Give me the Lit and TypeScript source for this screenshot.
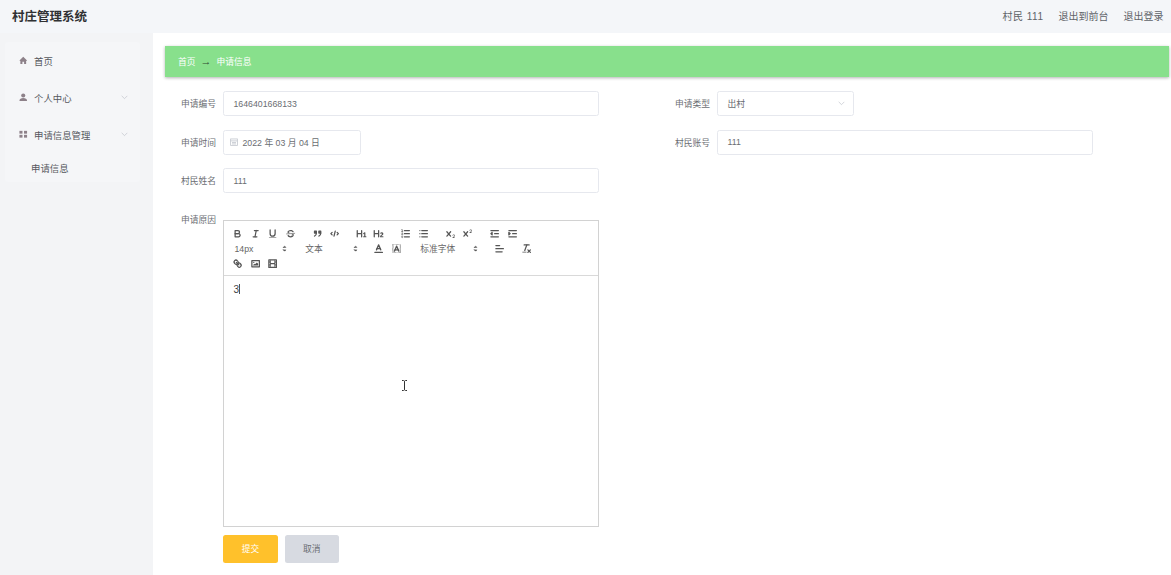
import { LitElement, html, css, svg } from "lit";
import { customElement } from "lit/decorators.js";

const S = (inner: unknown) => html`<svg class="qi" viewBox="0 0 18 18">${inner}</svg>`;
const xMark = "M9.651,5.241a1,1,0,0,0-1.41.108L6,7.964,3.759,5.349a1,1,0,1,0-1.519,1.3L4.683,9.5,2.241,12.35a1,1,0,1,0,1.519,1.3L6,11.036l2.241,2.616a1,1,0,0,0,1.519-1.3L7.317,9.5,9.759,6.651A1,1,0,0,0,9.651,5.241Z";
const checker: [number, number][] = [];
for (let y = 2; y < 16; y++) for (let x = 2; x < 16; x++) {
  const inA = y >= 3 && y <= 14 && x >= 4 && x <= 13;
  if ((x + y) % 2 === 0 && !inA) checker.push([x, y]);
}
const ICONS: Record<string, unknown> = {
  bold: svg`<path class="st" d="M5,4H9.5A2.5,2.5,0,0,1,12,6.5v0A2.5,2.5,0,0,1,9.5,9H5V4Z"/><path class="st" d="M5,9h5.5A2.5,2.5,0,0,1,13,11.5v0A2.5,2.5,0,0,1,10.5,14H5V9Z"/>`,
  italic: svg`<line class="st" x1="7" x2="13" y1="4" y2="4"/><line class="st" x1="5" x2="11" y1="14" y2="14"/><line class="st" x1="8" x2="10" y1="14" y2="4"/>`,
  underline: svg`<path class="st" d="M5,3V9a4.012,4.012,0,0,0,4,4H9a4.012,4.012,0,0,0,4-4V3"/><rect class="fi" height="1" rx="0.5" ry="0.5" width="12" x="3" y="15"/>`,
  strike: svg`<line class="st thin" x1="15.5" x2="2.5" y1="8.5" y2="9.5"/><path class="fi" d="M9.007,8C6.542,7.791,6,7.519,6,6.5,6,5.792,7.283,5,9,5c1.571,0,2.765.679,2.969,1.309a1,1,0,0,0,1.9-.617C13.356,4.106,11.354,3,9,3,6.2,3,4,4.538,4,6.5a3.2,3.2,0,0,0,.5,1.843Z"/><path class="fi" d="M8.984,10C11.457,10.208,12,10.479,12,11.5c0,.708-1.283,1.5-3,1.5-1.571,0-2.765-.679-2.969-1.309a1,1,0,1,0-1.9.617C4.644,13.894,6.646,15,9,15c2.8,0,5-1.538,5-3.5a3.2,3.2,0,0,0-.5-1.843Z"/>`,
  quote: svg`<rect class="fi st" height="3" width="3" x="4" y="5"/><rect class="fi st" height="3" width="3" x="11" y="5"/><path class="st" d="M7,8c0,4.031-3,5-3,5"/><path class="st" d="M14,8c0,4.031-3,5-3,5"/>`,
  code: svg`<polyline class="st" points="5 7 3 9 5 11"/><polyline class="st" points="13 7 15 9 13 11"/><line class="st" x1="10" x2="8" y1="5" y2="13"/>`,
  h1: svg`<path class="fi" d="M10,4V14a1,1,0,0,1-2,0V10H3v4a1,1,0,0,1-2,0V4A1,1,0,0,1,3,4V8H8V4a1,1,0,0,1,2,0Zm6.06787,9.209H14.98975V7.59863a.54085.54085,0,0,0-.605-.60547h-.62744a1.01119,1.01119,0,0,0-.748.29688L11.645,8.56641a.5435.5435,0,0,0-.022.8584l.28613.30762a.53861.53861,0,0,0,.84717.0332l.09912-.08789a1.2137,1.2137,0,0,0,.2417-.35254h.02246s-.01123.30859-.01123.60547V13.209H12.041a.54085.54085,0,0,0-.605.60547v.43945a.54085.54085,0,0,0,.605.60547h4.02686a.54085.54085,0,0,0,.605-.60547v-.43945A.54085.54085,0,0,0,16.06787,13.209Z"/>`,
  h2: svg`<path class="fi" d="M16.73975,13.81445v.43945a.54085.54085,0,0,1-.605.60547H11.855a.58392.58392,0,0,1-.64893-.60547V14.0127c0-2.90527,3.39941-3.42187,3.39941-4.55469a.77675.77675,0,0,0-.84717-.78125,1.17684,1.17684,0,0,0-.83594.38477c-.2749.26367-.561.374-.85791.13184l-.4292-.34082c-.30811-.24219-.38525-.51758-.1543-.81445a2.97155,2.97155,0,0,1,2.45361-1.17676,2.45393,2.45393,0,0,1,2.68408,2.40918c0,2.45312-3.1792,2.92676-3.27832,3.93848h2.79443A.54085.54085,0,0,1,16.73975,13.81445ZM9,3A.99974.99974,0,0,0,8,4V8H3V4A1,1,0,0,0,1,4V14a1,1,0,0,0,2,0V10H8v4a1,1,0,0,0,2,0V4A.99974.99974,0,0,0,9,3Z"/>`,
  ol: svg`<line class="st" x1="7" x2="15" y1="4" y2="4"/><line class="st" x1="7" x2="15" y1="9" y2="9"/><line class="st" x1="7" x2="15" y1="14" y2="14"/><line class="st thin" x1="2.5" x2="4.5" y1="5.5" y2="5.5"/><path class="fi" d="M3.5,6A0.5,0.5,0,0,1,3,5.5V3.085l-0.276.138A0.5,0.5,0,0,1,2.053,3c-0.124-.247-0.023-0.324.224-0.447l1-.5A0.5,0.5,0,0,1,4,2.5v3A0.5,0.5,0,0,1,3.5,6Z"/><path class="st thin" d="M4.5,10.5h-2c0-.234,1.85-1.076,1.85-2.234A0.959,0.959,0,0,0,2.5,8.156"/><path class="st thin" d="M2.5,14.846a0.959,0.959,0,0,0,1.85-.109A0.7,0.7,0,0,0,3.75,14a0.688,0.688,0,0,0,.6-0.736,0.959,0.959,0,0,0-1.85-.109"/>`,
  ul: svg`<line class="st" x1="6" x2="15" y1="4" y2="4"/><line class="st" x1="6" x2="15" y1="9" y2="9"/><line class="st" x1="6" x2="15" y1="14" y2="14"/><line class="st" x1="3" x2="3" y1="4" y2="4"/><line class="st" x1="3" x2="3" y1="9" y2="9"/><line class="st" x1="3" x2="3" y1="14" y2="14"/>`,
  sub: svg`<path class="fi" d="${xMark}"/><path class="fi" d="M15.5,15H13.861a3.858,3.858,0,0,0,1.914-2.975,1.8,1.8,0,0,0-1.6-1.751A1.921,1.921,0,0,0,12.021,11.7a0.50013,0.50013,0,1,0,.957.291h0a0.914,0.914,0,0,1,1.053-.725,0.81,0.81,0,0,1,.744.762c0,1.076-1.16971,1.86982-1.93971,2.43082A1.45639,1.45639,0,0,0,12,15.5a0.5,0.5,0,0,0,.5.5h3A0.5,0.5,0,0,0,15.5,15Z"/>`,
  sup: svg`<path class="fi" d="${xMark}"/><path class="fi" d="M15.5,7H13.861a4.015,4.015,0,0,0,1.914-2.975,1.8,1.8,0,0,0-1.6-1.751A1.922,1.922,0,0,0,12.021,3.7a0.5,0.5,0,1,0,.957.291,0.917,0.917,0,0,1,1.053-.725,0.81,0.81,0,0,1,.744.762c0,1.077-1.164,1.925-1.934,2.486A1.423,1.423,0,0,0,12,7.5a0.5,0.5,0,0,0,.5.5h3A0.5,0.5,0,0,0,15.5,7Z"/>`,
  indent: svg`<line class="st" x1="3" x2="15" y1="14" y2="14"/><line class="st" x1="3" x2="15" y1="4" y2="4"/><line class="st" x1="9" x2="15" y1="9" y2="9"/><polyline class="fi st" points="3 7 3 11 5 9 3 7"/>`,
  outdent: svg`<line class="st" x1="3" x2="15" y1="14" y2="14"/><line class="st" x1="3" x2="15" y1="4" y2="4"/><line class="st" x1="9" x2="15" y1="9" y2="9"/><polyline class="st" points="5 7 5 11 3 9 5 7"/>`,
  color: svg`<line class="st" x1="3" x2="15" y1="15" y2="15"/><polyline class="st" points="5.5 11 9 3 12.5 11"/><line class="st" x1="11.63" x2="6.38" y1="9" y2="9"/>`,
  background: svg`${checker.map(([x, y]) => svg`<rect class="fi" x="${x}" y="${y}" width="1" height="1"/>`)}<polyline class="st" points="5.5 13 9 5 12.5 13"/><line class="st" x1="11.63" x2="6.38" y1="11" y2="11"/>`,
  align: svg`<line class="st" x1="3" x2="15" y1="9" y2="9"/><line class="st" x1="3" x2="13" y1="14" y2="14"/><line class="st" x1="3" x2="9" y1="4" y2="4"/>`,
  clean: svg`<line class="st" x1="5" x2="13" y1="3" y2="3"/><line class="st" x1="6" x2="9.35" y1="12" y2="3"/><line class="st" x1="11" x2="15" y1="11" y2="15"/><line class="st" x1="15" x2="11" y1="11" y2="15"/><rect class="fi" height="1" rx="0.5" ry="0.5" width="7" x="2" y="14"/>`,
  link: svg`<line class="st" x1="7" x2="11" y1="7" y2="11"/><path class="st" d="M8.9,4.577a3.476,3.476,0,0,1,.36,4.679A3.476,3.476,0,0,1,4.577,8.9C3.185,7.5,2.035,6.4,4.217,4.217S7.5,3.185,8.9,4.577Z"/><path class="st" d="M13.423,9.1a3.476,3.476,0,0,0-4.679-.36,3.476,3.476,0,0,0,.36,4.679c1.392,1.392,2.5,2.542,4.679.36S14.815,10.5,13.423,9.1Z"/>`,
  image: svg`<rect class="st" height="10" width="12" x="3" y="4"/><circle class="fi" cx="6" cy="7" r="1"/><polyline class="fi" points="5 12 5 11 7 9 8 10 11 7 13 9 13 12 5 12"/>`,
  video: svg`<rect class="st" height="12" width="12" x="3" y="3"/><rect class="fi" height="12" width="1" x="5" y="3"/><rect class="fi" height="12" width="1" x="12" y="3"/><rect class="fi" height="2" width="8" x="5" y="8"/><rect class="fi" height="1" width="3" x="3" y="5"/><rect class="fi" height="1" width="3" x="3" y="7"/><rect class="fi" height="1" width="3" x="3" y="10"/><rect class="fi" height="1" width="3" x="3" y="12"/><rect class="fi" height="1" width="3" x="12" y="5"/><rect class="fi" height="1" width="3" x="12" y="7"/><rect class="fi" height="1" width="3" x="12" y="10"/><rect class="fi" height="1" width="3" x="12" y="12"/>`,
};

const chevron = html`<svg class="chev" viewBox="0 0 10 6"><polyline points="1,1 5,5 9,1" /></svg>`;
const btn = (n: string) => html`<span class="qb">${S(ICONS[n])}</span>`;
const picker = (label: string, cls: string) => html`<span class="picker ${cls}"><span>${label}</span>
  <svg class="qi" viewBox="0 0 18 18"><polygon class="fi st thin" points="7 11 9 13 11 11 7 11"/><polygon class="fi st thin" points="7 7 9 5 11 7 7 7"/></svg></span>`;

@customElement("app-root")
export class AppRoot extends LitElement {
  static styles = css`
    :host {
      display: block;
      position: relative;
      width: 1171px;
      height: 575px;
      overflow: hidden;
      background: #fff;
      font-family: "Liberation Sans", "Noto Sans CJK SC", sans-serif;
      color: #606266;
    }
    .top {
      box-sizing: border-box;
      height: 33px;
      display: flex;
      align-items: center;
      justify-content: space-between;
      padding: 0 7.5px 2px 12px;
      background: #f4f6f9;
    }
    .title { font-size: 12.5px; font-weight: 700; color: #303133; }
    .userbar { display: flex; gap: 15px; font-size: 10px; color: #5f6368; }
    .wide { letter-spacing: 0.5px; }
    .body { display: flex; height: 542px; }
    .side { width: 153px; flex: none; background: #f3f4f6; padding-top: 9px; box-sizing: border-box; }
    .menu { width: 135px; margin-left: 5px; background: #f5f6f8; border-radius: 3px; }
    .mi {
      height: 37px;
      display: flex;
      align-items: center;
      padding-left: 14px;
      font-size: 9.4px;
      color: #55585e;
    }
    .mi svg.ic { width: 8.5px; height: 8.5px; margin-right: 6.5px; fill: #8d8189; flex: none; }
    .chev { width: 7px; height: 4.5px; margin-left: auto; margin-right: 12px; fill: none; stroke: #c0c4cc; stroke-width: 1; }
    .sub { height: 29px; padding-left: 26px; display: flex; align-items: center; font-size: 9.4px; color: #55585e; }
    .main { flex: 1; padding: 13px 2px 0 12px; min-width: 0; }
    .crumb {
      height: 31px;
      display: flex;
      align-items: center;
      gap: 5px;
      padding-left: 13px;
      background: #88e08c;
      box-shadow: 0 1px 3px rgba(0, 0, 0, 0.3);
      color: #fff;
      font-size: 8.75px;
    }
    .arrow { font-family: "Liberation Sans", sans-serif; font-size: 11px; line-height: 1; color: #2f4a33; }
    .form { padding-top: 14px; display: flex; flex-direction: column; }
    .row { display: flex; height: 25px; margin-bottom: 13.5px; }
    .row.last { margin-bottom: 0; }
    .col { width: 494px; display: flex; align-items: center; flex: none; }
    .lab {
      width: 51px;
      margin-right: 7px;
      flex: none;
      text-align: right;
      font-size: 8.75px;
      color: #6b6e73;
    }
    .input {
      box-sizing: border-box;
      height: 25px;
      width: 376px;
      display: flex;
      align-items: center;
      padding-left: 9.5px;
      border: 1px solid #e6e8ee;
      border-radius: 2.5px;
      font-size: 8.75px;
      color: #6a6d72;
      background: #fff;
    }
    .input.date { width: 138px; padding-left: 6px; gap: 4.5px; }
    .input.sel { width: 136.5px; justify-content: space-between; padding-right: 8px; }
    .input.sel .chev { margin: 0; }
    .cal { width: 8px; height: 8px; fill: none; stroke: #c0c4cc; stroke-width: 1; flex: none; }
    .reason { display: flex; margin-top: 27px; }
    .reason .lab { line-height: 1; margin-top: -4.5px; height: 10px; }
    .editor {
      box-sizing: border-box;
      width: 376px;
      height: 307px;
      border: 1px solid #d2d2d2;
      display: flex;
      flex-direction: column;
    }
    .tb {
      flex: none;
      box-sizing: border-box;
      height: 55px;
      padding: 5px;
      display: flex;
      flex-wrap: wrap;
      align-content: flex-start;
      border-bottom: 1px solid #d9d9d9;
    }
    .grp { display: inline-flex; margin-right: 9.4px; height: 15px; }
    .qb { width: 17.5px; height: 15px; display: flex; align-items: center; justify-content: center; }
    .qi { width: 11.25px; height: 11.25px; flex: none; }
    .st { fill: none; stroke: #555; stroke-width: 2; stroke-linecap: round; stroke-linejoin: round; }
    .st.thin { stroke-width: 1; }
    .fi { fill: #555; }
    .fi.st { fill: #555; }
    .picker {
      height: 15px;
      display: flex;
      align-items: center;
      justify-content: space-between;
      box-sizing: border-box;
      padding-left: 5.5px;
      font-size: 8.75px;
      color: #666;
    }
    .picker.w61 { width: 61.25px; }
    .picker.w67 { width: 67px; }
    .content { flex: 1; padding: 7px 9.4px; font-size: 10px; line-height: 13px; color: #444; }
    .caret { display: inline-block; width: 1px; height: 10px; background: #555; vertical-align: -1px; }
    .actions { display: flex; gap: 6.5px; margin-top: 7.5px; padding-left: 58px; }
    .b { width: 55px; height: 28px; border-radius: 2.5px; display: flex; align-items: center; justify-content: center; font-size: 8.75px; }
    .ok { background: #ffc12b; color: #fff; }
    .no { background: #d7dae1; color: #6b6e73; width: 54.5px; }
    .ibeam { position: absolute; left: 401px; top: 380px; width: 7px; height: 11px; fill: none; stroke: #333; stroke-width: 1; }
  `;

  render() {
    return html`
      <div class="top">
        <div class="title">村庄管理系统</div>
        <div class="userbar"><span class="wide">村民 111</span><span>退出到前台</span><span>退出登录</span></div>
      </div>
      <div class="body">
        <aside class="side">
          <div class="menu">
            <div class="mi"><svg class="ic" viewBox="0 0 10 10"><path d="M5 1 0.5 5.2 1.6 6 V9.5 H4 V6.8 H6 V9.5 H8.4 V6 L9.5 5.2Z"/></svg>首页</div>
            <div class="mi"><svg class="ic" viewBox="0 0 10 10"><circle cx="5" cy="3" r="2.4"/><path d="M0.5 9.5 C0.5 6.8 2.5 6 5 6 S9.5 6.8 9.5 9.5Z"/></svg>个人中心${chevron}</div>
            <div class="mi"><svg class="ic" viewBox="0 0 10 10"><rect x="0.5" y="1" width="3.6" height="3.3"/><rect x="5.9" y="1" width="3.6" height="3.3"/><rect x="0.5" y="5.7" width="3.6" height="3.3"/><rect x="5.9" y="5.7" width="3.6" height="3.3"/></svg>申请信息管理${chevron}</div>
            <div class="sub">申请信息</div>
          </div>
        </aside>
        <main class="main">
          <div class="crumb"><span>首页</span><span class="arrow">→</span><span>申请信息</span></div>
          <div class="form">
            <div class="row">
              <div class="col"><span class="lab">申请编号</span><div class="input">1646401668133</div></div>
              <div class="col"><span class="lab">申请类型</span><div class="input sel"><span>出村</span>${chevron}</div></div>
            </div>
            <div class="row">
              <div class="col"><span class="lab">申请时间</span><div class="input date"><svg class="cal" viewBox="0 0 10 10"><rect x="0.8" y="1.2" width="8.4" height="8"/><line x1="0.8" y1="3.6" x2="9.2" y2="3.6"/><line x1="2.5" y1="5.6" x2="7.5" y2="5.6"/><line x1="2.5" y1="7.4" x2="7.5" y2="7.4"/></svg><span>2022 年 03 月 04 日</span></div></div>
              <div class="col"><span class="lab">村民账号</span><div class="input">111</div></div>
            </div>
            <div class="row last">
              <div class="col"><span class="lab">村民姓名</span><div class="input">111</div></div>
            </div>
            <div class="reason">
              <span class="lab">申请原因</span>
              <div class="editor">
                <div class="tb">
                  <span class="grp">${btn("bold")}${btn("italic")}${btn("underline")}${btn("strike")}</span>
                  <span class="grp">${btn("quote")}${btn("code")}</span>
                  <span class="grp">${btn("h1")}${btn("h2")}</span>
                  <span class="grp">${btn("ol")}${btn("ul")}</span>
                  <span class="grp">${btn("sub")}${btn("sup")}</span>
                  <span class="grp">${btn("outdent")}${btn("indent")}</span>
                  <span class="grp">${picker("14px", "w61")}</span>
                  <span class="grp">${picker("文本", "w61")}</span>
                  <span class="grp">${btn("color")}${btn("background")}</span>
                  <span class="grp">${picker("标准字体", "w67")}</span>
                  <span class="grp">${btn("align")}</span>
                  <span class="grp">${btn("clean")}</span>
                  <span class="grp">${btn("link")}${btn("image")}${btn("video")}</span>
                </div>
                <div class="content">3<span class="caret"></span></div>
              </div>
            </div>
            <div class="actions"><div class="b ok">提交</div><div class="b no">取消</div></div>
          </div>
        </main>
      </div>
      <svg class="ibeam" viewBox="0 0 7 11"><path d="M1 0.5 H2.5 L3.5 1.2 L4.5 0.5 H6 M3.5 1.2 V9.8 M1 10.5 H2.5 L3.5 9.8 L4.5 10.5 H6"/></svg>
    `;
  }
}
